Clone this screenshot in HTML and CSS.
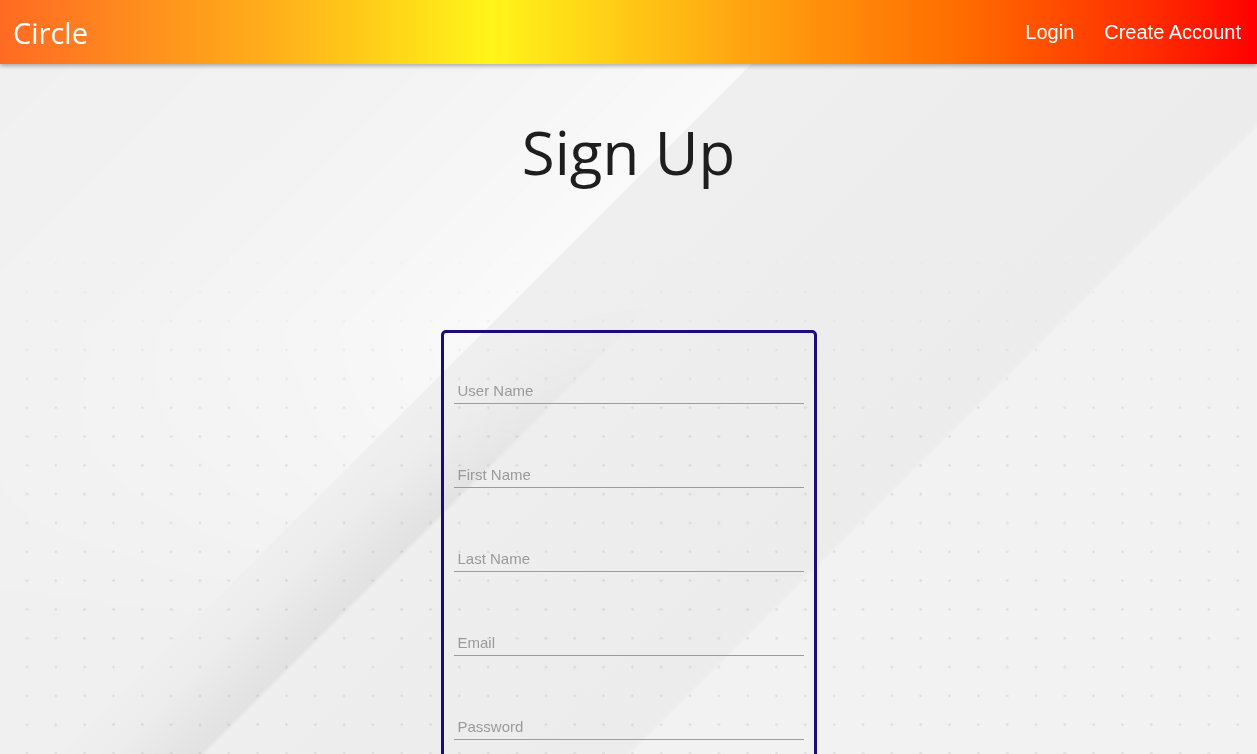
FILE: index.html
```html
<!DOCTYPE html>
<html lang="en">
<head>
<meta charset="utf-8">
<title>Circle - Sign Up</title>
<link rel="stylesheet" href="styles.css">
</head>
<body>
<div class="page">
  <header class="navbar">
    <a class="brand" href="#">Circle</a>
    <nav class="nav">
      <a class="nav-link" href="#">Login</a>
      <a class="nav-link" href="#">Create Account</a>
    </nav>
  </header>
  <main class="content">
    <h1 class="title">Sign Up</h1>
    <form class="card">
      <input class="field" type="text" placeholder="User Name">
      <input class="field" type="text" placeholder="First Name">
      <input class="field" type="text" placeholder="Last Name">
      <input class="field" type="email" placeholder="Email">
      <input class="field" type="password" placeholder="Password">
      <input class="field" type="password" placeholder="Confirm Password">
      <button class="submit" type="submit">Sign Up</button>
    </form>
  </main>
</div>
</body>
</html>
```

FILE: styles.css
```css
html, body {
  margin: 0;
  padding: 0;
}
body {
  overflow: hidden;
  font-family: "Liberation Sans", Arial, sans-serif;
  background-color: #f0f0f0;
  background-image: linear-gradient(135deg,
    #f0f0f0 0%, #f0f0f0 40.5%,
    #efefef 40.6%, #ededed 58%, #ececec 68.6%,
    #f2f2f2 68.9%, #f2f2f2 100%);
  background-attachment: fixed;
}
/* light sheen above the first diagonal */
body::before {
  content: "";
  position: fixed;
  inset: 0;
  z-index: 0;
  pointer-events: none;
  background-image: linear-gradient(135deg,
    rgba(255,255,255,0) 0%, rgba(255,255,255,0.2) 22%,
    rgba(255,255,255,0.45) 34%, rgba(255,255,255,0.65) 40.5%, rgba(255,255,255,0) 40.6%);
  -webkit-mask-image: linear-gradient(to bottom, #000 330px, transparent 640px);
  mask-image: linear-gradient(to bottom, #000 330px, transparent 640px);
}
/* shadowed band */
body::after {
  content: "";
  position: fixed;
  inset: 0;
  z-index: 0;
  pointer-events: none;
  background-image: linear-gradient(135deg,
    transparent 40.6%, rgba(0,0,0,0.006) 43%, rgba(0,0,0,0.05) 47.4%, transparent 47.7%);
  -webkit-mask-image: linear-gradient(to bottom, transparent 300px, #000 520px);
  mask-image: linear-gradient(to bottom, transparent 300px, #000 520px);
}
.page {
  position: relative;
  min-height: 100vh;
}
/* dotted pattern */
.page::after {
  content: "";
  position: fixed;
  inset: 0;
  z-index: 0;
  pointer-events: none;
  background-image: radial-gradient(circle, rgba(0,0,0,0.09) 0, rgba(0,0,0,0.07) 1px, transparent 1.6px);
  background-size: 28.83px 28.83px;
  background-position: 12.6px -10.4px;
  -webkit-mask-image: linear-gradient(to bottom, transparent 230px, #000 430px);
  mask-image: linear-gradient(to bottom, transparent 230px, #000 430px);
}
.navbar {
  position: relative;
  z-index: 2;
  height: 64px;
  display: flex;
  align-items: center;
  justify-content: space-between;
  padding: 0 16px 0 13px;
  background: linear-gradient(to right, #ff6a22 0%, #ffb01a 22%, #fff51a 39%, #ffa812 58%, #ff6a00 77%, #ff2a00 92%, #ff0000 100%);
  box-shadow: 0 2px 4px rgba(0,0,0,0.3);
}
.brand {
  font-family: "Open Sans", "Noto Sans", sans-serif;
  font-size: 29px;
  color: #ffffff;
  text-decoration: none;
  margin-top: 1px;
}
.nav {
  display: flex;
  gap: 30px;
}
.nav-link {
  font-family: "Liberation Sans", Arial, sans-serif;
  font-size: 20px;
  color: #ffffff;
  text-decoration: none;
}
.content {
  position: relative;
  z-index: 1;
  display: flex;
  flex-direction: column;
  align-items: center;
}
.title {
  margin: 46px 0 0;
  font-family: "Open Sans", "Noto Sans", sans-serif;
  font-weight: 370;
  font-size: 60px;
  line-height: 84px;
  color: #1e1e1e;
}
.card {
  margin-top: 136px;
  width: 376px;
  box-sizing: border-box;
  border: 3px solid #1c0a7e;
  border-radius: 5px;
  padding: 47px 10px 40px;
  display: flex;
  flex-direction: column;
  gap: 60px;
}
.field {
  display: block;
  width: 350px;
  height: 24px;
  box-sizing: border-box;
  margin: 0;
  padding: 0 4px 3px;
  border: none;
  border-bottom: 1px solid #9c9c9c;
  background: transparent;
  font-family: "Liberation Sans", Arial, sans-serif;
  font-size: 15px;
  color: #333;
  outline: none;
}
.field::placeholder {
  color: #9a9a9a;
}
.submit {
  align-self: center;
  padding: 8px 24px;
  border: 2px solid #1c0a7e;
  border-radius: 4px;
  background: transparent;
  font-family: "Liberation Sans", Arial, sans-serif;
  font-size: 16px;
  color: #1c0a7e;
}
```
